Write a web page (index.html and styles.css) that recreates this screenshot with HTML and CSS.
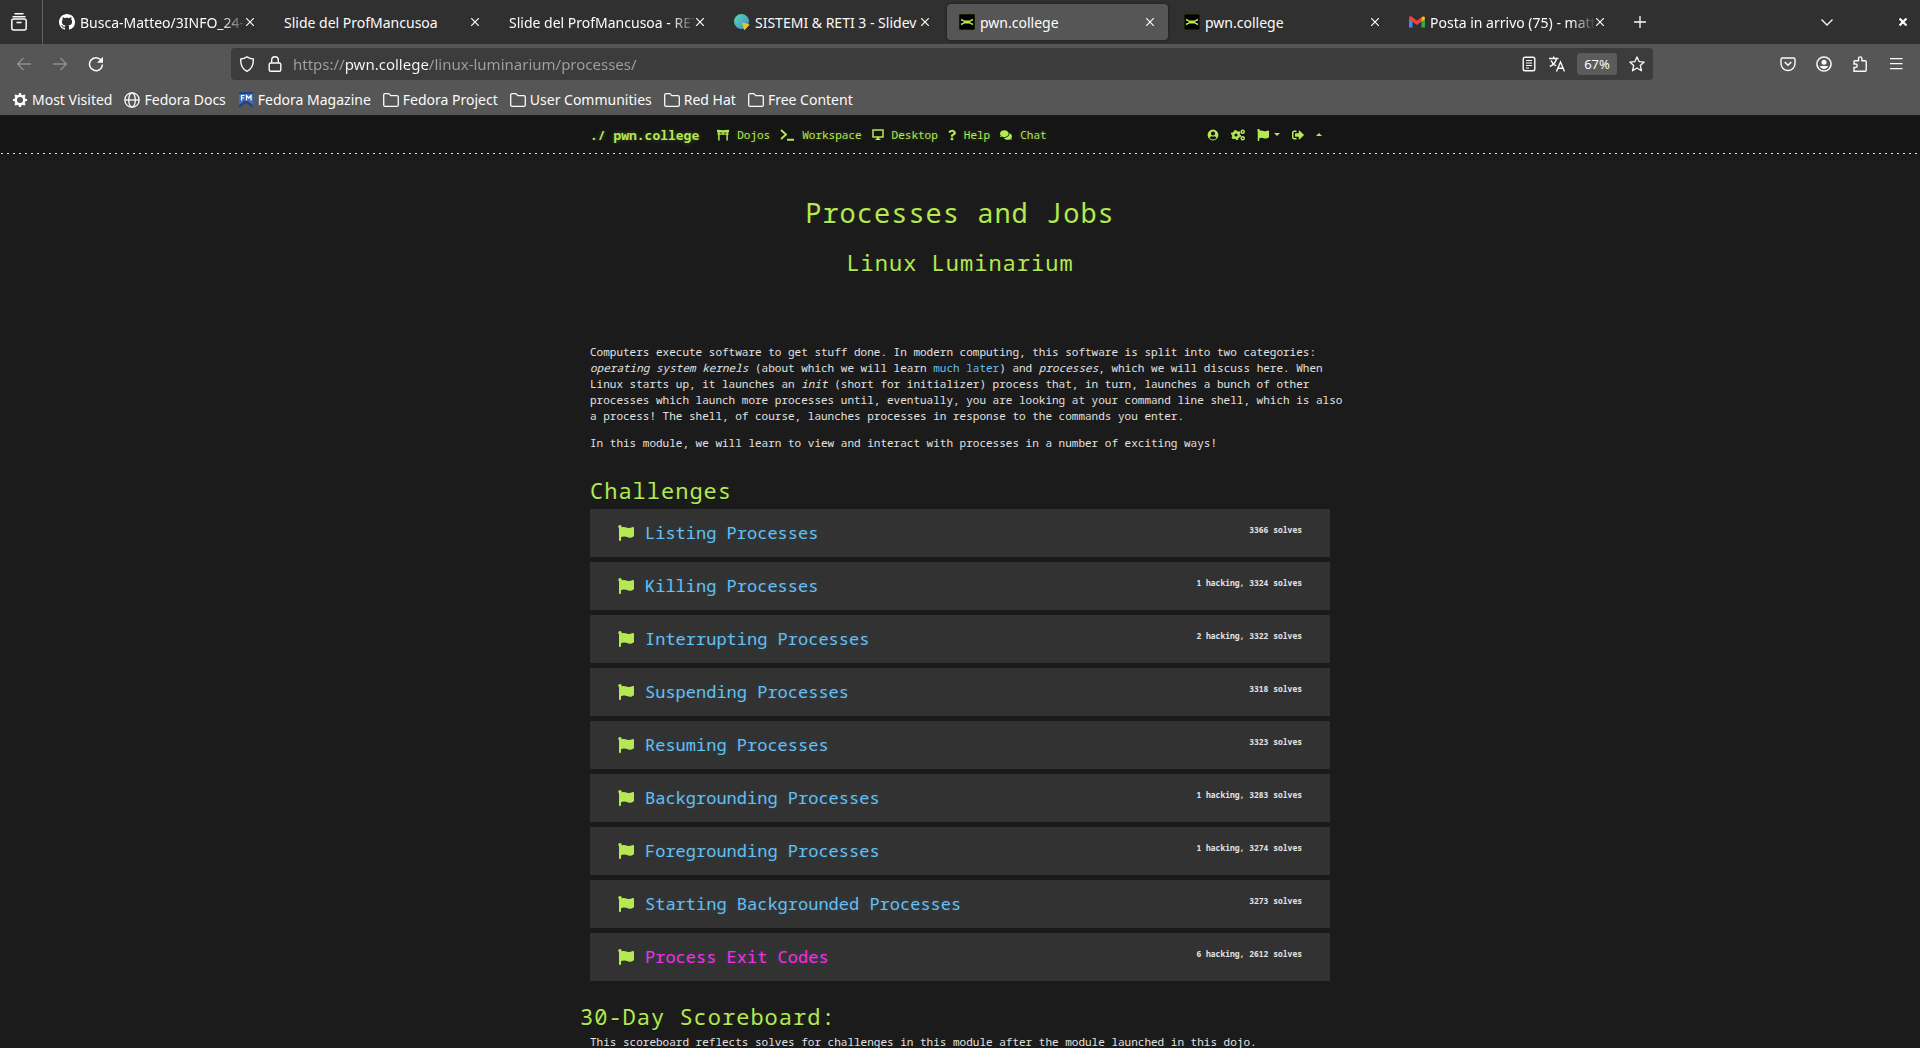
FILE: index.html
```html
<!DOCTYPE html>
<html lang="en">
<head>
<meta charset="utf-8">
<title>pwn.college</title>
<link rel="stylesheet" href="styles.css">
</head>
<body>
<svg class="defs" aria-hidden="true">
  <symbol id="flag" viewBox="0 0 512 512"><path d="M349.565 98.783C295.978 98.783 251.721 64 184.348 64c-24.955 0-47.309 4.384-68.045 12.013a55.947 55.947 0 0 0 3.586-23.562C118.117 24.015 94.806 1.206 66.338.048 34.345-1.254 8 24.296 8 56c0 19.026 9.497 35.825 24 45.945V488c0 13.255 10.745 24 24 24h16c13.255 0 24-10.745 24-24v-94.4c28.311-12.064 63.582-22.122 114.435-22.122 53.588 0 97.844 34.783 165.217 34.783 48.169 0 86.667-16.294 122.505-40.858C506.84 359.452 512 349.571 512 339.045v-243.1c0-23.393-24.269-38.87-45.485-29.016-34.338 15.948-76.454 31.854-116.95 31.854z"/></symbol>
  <symbol id="close" viewBox="0 0 8 8"><path d="M0 0l8 8M8 0L0 8" fill="none" stroke="currentColor" stroke-width="1.2"/></symbol>
  <symbol id="folder" viewBox="0 0 16 16"><path d="M.7 12.5v-9.500q0-1.400 1.400-1.400h3.700l2 2h6q1.500 0 1.500 1.500v7.900q0 1.400-1.500 1.400H2.100q-1.400 0-1.400-1.400z" fill="none" stroke="currentColor" stroke-width="1.300"/></symbol>
  <symbol id="pwn" viewBox="0 0 16 16"><rect width="16" height="16" rx="1" fill="#000" stroke="#2c3b12"/><path d="M2 5.500l3.500 1.800h5L14 5.500M2 10.500l3.500-1.800h5L14 10.500M5 8h6" fill="none" stroke="#b5e853" stroke-width="1.500"/></symbol>
</svg>

<header class="browser">
  <div class="tabstrip">
    <button class="recent" aria-label="Recent browsing"><svg width="16" height="18" viewBox="0 0 16 18"><path d="M3.500.8h9M1.500 3.800h13" stroke="currentColor" stroke-width="1.500" fill="none"/><rect x=".8" y="6" width="14.400" height="11" rx="2" fill="none" stroke="currentColor" stroke-width="1.500"/><path d="M5.500 9.500h5" stroke="currentColor" stroke-width="1.600"/></svg></button>
    <div class="tabs">
      <div class="tab"><svg class="i16" viewBox="0 0 16 16"><path fill="#fff" d="M8 0C3.580 0 0 3.580 0 8c0 3.540 2.290 6.530 5.470 7.590.4.070.55-.17.55-.38 0-.19-.01-.82-.01-1.490-2.010.37-2.530-.49-2.690-.94-.09-.23-.48-.94-.82-1.130-.28-.15-.68-.52-.01-.53.63-.01 1.080.58 1.230.82.72 1.210 1.870.87 2.330.66.07-.52.28-.87.51-1.070-1.780-.2-3.640-.89-3.640-3.950 0-.87.31-1.590.82-2.150-.08-.2-.36-1.020.08-2.120 0 0 .67-.21 2.200.82.64-.18 1.320-.27 2-.27s1.360.09 2 .27c1.530-1.040 2.200-.82 2.200-.82.44 1.100.16 1.920.08 2.120.51.56.82 1.270.82 2.150 0 3.070-1.870 3.750-3.650 3.950.29.25.54.73.54 1.480 0 1.070-.01 1.930-.01 2.200 0 .21.15.46.55.38A8.010 8.010 0 0 0 16 8c0-4.420-3.580-8-8-8z"/></svg><span class="label fade">Busca-Matteo/3INFO_24-25</span><button class="x" aria-label="Close tab"><svg><use href="#close"/></svg></button></div>
      <div class="tab"><span class="label">Slide del ProfMancusoa</span><button class="x" aria-label="Close tab"><svg><use href="#close"/></svg></button></div>
      <div class="tab"><span class="label fade">Slide del ProfMancusoa - RETI</span><button class="x" aria-label="Close tab"><svg><use href="#close"/></svg></button></div>
      <div class="tab"><svg class="i16" viewBox="0 0 16 16"><defs><linearGradient id="sl" x1="0" y1="0" x2="1" y2="1"><stop offset="0" stop-color="#5fd8b4"/><stop offset="1" stop-color="#3a8fc8"/></linearGradient></defs><circle cx="7.500" cy="7.500" r="7.500" fill="url(#sl)"/><path d="M8.500 9l6.500 1.800-4.500 5z" fill="#fcbc1a" stroke="#fcbc1a" stroke-linejoin="round"/></svg><span class="label">SISTEMI &amp; RETI 3 - Slidev</span><button class="x" aria-label="Close tab"><svg><use href="#close"/></svg></button></div>
      <div class="tab active"><svg class="i16"><use href="#pwn"/></svg><span class="label">pwn.college</span><button class="x" aria-label="Close tab"><svg><use href="#close"/></svg></button></div>
      <div class="tab"><svg class="i16"><use href="#pwn"/></svg><span class="label">pwn.college</span><button class="x" aria-label="Close tab"><svg><use href="#close"/></svg></button></div>
      <div class="tab"><svg class="i16" viewBox="0 0 16 16"><path d="M0 4v9.500h3.500V6z" fill="#4285f4"/><path d="M16 4v9.500h-3.500V6z" fill="#34a853"/><path d="M0 4q0-2 2-2l6 4.800V11L0 5.500z" fill="#ea4335"/><path d="M8 6.800L12.500 3v4.500L8 11z" fill="#ea4335"/><path d="M12.500 3.200Q14 2 15.200 2.600 16 3 16 5l-3.500 2.700z" fill="#fbbc04"/></svg><span class="label fade">Posta in arrivo (75) - matteo</span><button class="x" aria-label="Close tab"><svg><use href="#close"/></svg></button></div>
    </div>
    <button class="ib" aria-label="New tab"><svg class="i12" viewBox="0 0 12 12"><path d="M6 0v12M0 6h12" stroke="currentColor" stroke-width="1.300"/></svg></button>
    <div class="tabend">
      <button class="ib" aria-label="List all tabs"><svg class="i12" viewBox="0 0 12 12"><path d="M.5 3.500L6 9l5.500-5.500" fill="none" stroke="currentColor" stroke-width="1.300"/></svg></button>
      <button class="ib" aria-label="Close window"><svg width="8" height="8" viewBox="0 0 8 8"><path d="M.5.5l7 7M7.500.5l-7 7" stroke="#fff" stroke-width="2.200"/></svg></button>
    </div>
  </div>

  <div class="toolbar">
    <div class="navbuttons">
      <button class="ib dim" aria-label="Back"><svg class="i16" viewBox="0 0 16 16"><path d="M15 8H1.500M7.500 2L1.500 8l6 6" fill="none" stroke="currentColor" stroke-width="1.400"/></svg></button>
      <button class="ib dim" aria-label="Forward"><svg class="i16" viewBox="0 0 16 16"><path d="M1 8h13.500M8.500 2l6 6-6 6" fill="none" stroke="currentColor" stroke-width="1.400"/></svg></button>
      <button class="ib" aria-label="Reload"><svg class="i16" viewBox="0 0 16 16"><path d="M13 4a6.500 6.500 0 1 0 1.500 4.500" fill="none" stroke="currentColor" stroke-width="1.500"/><path d="M15 .8v6H9z" fill="currentColor"/></svg></button>
    </div>
    <div class="urlbar">
      <svg class="i16" viewBox="0 0 16 16"><path d="M8 .8c2 1.200 4 2 6.200 2.200C14.700 8.500 12.500 13 8 15.300 3.500 13 1.300 8.500 1.800 3 4 2.800 6 2 8 .8z" fill="none" stroke="currentColor" stroke-width="1.400"/></svg>
      <svg class="i16" viewBox="0 0 16 16"><rect x="2.200" y="7" width="11.600" height="8.200" rx="1.500" fill="none" stroke="currentColor" stroke-width="1.400"/><path d="M4.700 7V4a3.300 3.300 0 0 1 6.600 0v3" fill="none" stroke="currentColor" stroke-width="1.400"/></svg>
      <input class="url" type="text" aria-label="Address" value="https://pwn.college/linux-luminarium/processes/">
      <button class="ub" aria-label="Reader view"><svg class="i16" viewBox="0 0 16 16"><rect x="2.200" y="1.200" width="11.600" height="13.600" rx="1.800" fill="none" stroke="currentColor" stroke-width="1.400"/><path d="M5 4.500h6M5 7h6M5 9.500h6M5 12h3" stroke="currentColor" stroke-width="1.200"/></svg></button>
      <button class="ub" aria-label="Translate"><svg class="i16" viewBox="0 0 16 16"><path d="M0 2.500h9.500M4.700.5v2M7.500 2.500Q6.500 8 .8 10.500M2 4.500q1.500 3.500 5 5.300M7.500 15.500l4-9.500 4 9.500M9 12.300h5" fill="none" stroke="currentColor" stroke-width="1.400"/></svg></button>
      <button class="zoomlevel">67%</button>
      <button class="ub" aria-label="Bookmark this page"><svg class="i16" viewBox="0 0 16 16"><path d="M8 .9l2.100 4.700 5.100.5-3.900 3.400 1.200 5.300L8 12l-4.500 2.800 1.200-5.300L.8 6.100l5.100-.5z" fill="none" stroke="currentColor" stroke-width="1.300" stroke-linejoin="round"/></svg></button>
    </div>
    <div class="tools">
      <button class="ib" aria-label="Save to Pocket"><svg class="i16" viewBox="0 0 16 16"><path d="M2.500 2h11q1.500 0 1.500 1.500V7.500a7 7 0 0 1-14 0V3.500Q1 2 2.500 2z" fill="none" stroke="currentColor" stroke-width="1.400"/><path d="M4.700 6L8 9.200 11.300 6" fill="none" stroke="currentColor" stroke-width="1.500"/></svg></button>
      <button class="ib" aria-label="Account"><svg class="i16" viewBox="0 0 16 16"><circle cx="8" cy="8" r="7.100" fill="none" stroke="currentColor" stroke-width="1.500"/><circle cx="8" cy="6.200" r="2.500" fill="currentColor"/><path d="M3.800 10h8.400Q11 13 8 13t-4.200-3z" fill="currentColor"/></svg></button>
      <button class="ib" aria-label="Extensions"><svg class="i16" viewBox="0 0 16 16"><path d="M2 15.200V11.500h1.500a1.600 1.600 0 0 0 0-3.500H2V5.500q0-.8.8-.8H6.500V2.600a1.700 1.700 0 0 1 3.400 0v2.100h3.300q1 0 1 1v8.500q0 1-1 1z" fill="none" stroke="currentColor" stroke-width="1.400"/></svg></button>
      <button class="ib" aria-label="Menu"><svg class="i16" viewBox="0 0 16 16"><path d="M2 2.700h12.500M2 7.700h12.500M2 12.700h12.500" stroke="currentColor" stroke-width="1.300"/></svg></button>
    </div>
  </div>

  <nav class="bookmarks" aria-label="Bookmarks">
    <a href="#"><svg class="i16" viewBox="0 0 16 16"><circle cx="8" cy="8" r="4.300" fill="none" stroke="currentColor" stroke-width="2.600"/><path d="M8 1v2.500M8 12.500V15M1 8h2.500M12.500 8H15M3.100 3.100l1.700 1.700M11.200 11.200l1.700 1.700M3.100 12.900l1.700-1.700M11.200 4.800l1.700-1.700" stroke="currentColor" stroke-width="2.200"/></svg>Most Visited</a>
    <a href="#"><svg class="i16" viewBox="0 0 16 16"><g fill="none" stroke="currentColor" stroke-width="1.300"><circle cx="8" cy="8" r="7.200"/><ellipse cx="8" cy="8" rx="3.300" ry="7.200"/><path d="M1 8h14"/></g></svg>Fedora Docs</a>
    <a href="#"><svg class="i16" viewBox="0 0 16 16"><path d="M1 0h14v16l-7-5-7 5z" fill="#3c6eb4"/><path d="M1 0h14v2H1zM1 16v-3l7-5 7 5v3l-7-5z" fill="#294172"/><path d="M3.500 8.500V3.500h3M3.500 6h2.500M8.500 8.500v-5l2.200 2.500L13 3.500v5" fill="none" stroke="#fff" stroke-width="1.200"/></svg>Fedora Magazine</a>
    <a href="#"><svg class="i16"><use href="#folder"/></svg>Fedora Project</a>
    <a href="#"><svg class="i16"><use href="#folder"/></svg>User Communities</a>
    <a href="#"><svg class="i16"><use href="#folder"/></svg>Red Hat</a>
    <a href="#"><svg class="i16"><use href="#folder"/></svg>Free Content</a>
  </nav>
</header>

<div class="page">
  <nav class="sitenav" aria-label="Site">
    <div class="container navrow">
      <a class="brand" href="#">./ pwn.college</a>
      <a href="#"><svg class="i12" viewBox="0 0 512 512"><path d="M0 40q0-14 14-8 242 32 484 0 14-6 14 8v88q0 16-16 16h-32v48h32v56h-32v240h-64V248H112v240H48V248H16v-56h32v-48H16Q0 144 0 128zM112 144v48h112v-48zm176 0v48h112v-48z"/></svg>Dojos</a>
      <a href="#"><svg class="i14" viewBox="0 0 14 12"><path d="M1 1l5 4.500L1 10M7 10.700h7" fill="none" stroke="currentColor" stroke-width="1.900"/></svg>Workspace</a>
      <a href="#"><svg class="i12" viewBox="0 0 12 12"><path d="M1 1h10v7H1z" fill="none" stroke="currentColor" stroke-width="1.500"/><path d="M5 8h2l.5 2h1v1h-5v-1h1z"/></svg>Desktop</a>
      <a href="#"><svg class="i8" viewBox="0 0 384 512"><path d="M202.021 0C122.202 0 70.503 32.703 29.914 91.026c-7.363 10.580-5.093 25.086 5.178 32.874l43.138 32.709c10.373 7.865 25.132 6.026 33.253-4.148 25.049-31.381 43.630-49.449 82.757-49.449 30.764 0 68.816 19.799 68.816 49.631 0 22.552-18.617 34.134-48.993 51.164-35.423 19.860-82.299 44.576-82.299 106.405V320c0 13.255 10.745 24 24 24h72.471c13.255 0 24-10.745 24-24v-5.773c0-42.860 125.268-44.645 125.268-160.627C377.504 66.256 286.902 0 202.021 0zM192 373.459c-38.196 0-69.271 31.075-69.271 69.271 0 38.195 31.075 69.270 69.271 69.270s69.271-31.075 69.271-69.271-31.075-69.270-69.271-69.270z"/></svg>Help</a>
      <a href="#"><svg class="i12" viewBox="0 0 576 512"><path d="M416 192c0-88.400-93.100-160-208-160S0 103.600 0 192c0 34.300 14.100 65.900 38 92-13.400 30.200-35.500 54.200-35.800 54.500-2.200 2.300-2.800 5.700-1.500 8.700S4.800 352 8 352c36.600 0 66.900-12.300 88.700-25 32.200 15.700 70.300 25 111.300 25 114.900 0 208-71.600 208-160zm122 220c23.900-26 38-57.700 38-92 0-66.900-53.500-124.200-129.300-148.100.9 6.600 1.300 13.300 1.300 20.100 0 105.900-107.700 192-240 192-10.800 0-21.300-.8-31.700-1.900C207.800 439.600 281.800 480 368 480c41 0 79.100-9.200 111.300-25 21.800 12.700 52.100 25 88.700 25 3.200 0 6.100-1.900 7.300-4.800 1.300-2.900.7-6.300-1.500-8.700-.3-.3-22.400-24.200-35.800-54.500z"/></svg>Chat</a>
      <div class="usertools">
        <a href="#" aria-label="Profile"><svg class="i12" viewBox="0 0 12 12"><path fill-rule="evenodd" d="M6 .6a5.400 5.400 0 1 0 0 10.800A5.400 5.400 0 1 0 6 .6zM6 2.400a2 2 0 1 1 0 4.200 2 2 0 1 1 0-4.200zM2.500 9Q3.200 7.300 4.800 7.300q1.200.5 2.400 0Q8.800 7.300 9.500 9 8 10.500 6 10.500T2.500 9z"/></svg></a>
        <a href="#" aria-label="Settings"><svg class="i14" viewBox="0 0 14 12"><g fill="none" stroke="currentColor"><circle cx="5" cy="6" r="2.800" stroke-width="2.400"/><circle cx="5" cy="6" r="4.400" stroke-width="1.400" stroke-dasharray="2.300 2.300"/><circle cx="11.700" cy="2.700" r="1.500" stroke-width="1.500"/><circle cx="11.700" cy="9.300" r="1.500" stroke-width="1.500"/></g></svg></a>
        <a href="#" class="drop" aria-label="Flag"><svg class="i12"><use href="#flag"/></svg><svg class="caret" viewBox="0 0 6 3"><path d="M0 0h6L3 3z"/></svg></a>
        <a href="#" aria-label="Log out"><svg class="i12" viewBox="0 0 512 512"><path d="M497 273L329 441c-15 15-41 4.500-41-17v-96H152c-13.300 0-24-10.700-24-24v-96c0-13.300 10.700-24 24-24h136V88c0-21.400 25.900-32 41-17l168 168c9.300 9.400 9.300 24.600 0 34zM192 436v-40c0-6.600-5.400-12-12-12H96c-17.700 0-32-14.300-32-32V160c0-17.700 14.300-32 32-32h84c6.600 0 12-5.400 12-12V76c0-6.600-5.400-12-12-12H96c-53 0-96 43-96 96v192c0 53 43 96 96 96h84c6.600 0 12-5.400 12-12z"/></svg></a>
        <a href="#" aria-label="Collapse"><svg class="caret" viewBox="0 0 6 3"><path d="M0 3h6L3 0z"/></svg></a>
      </div>
    </div>
  </nav>

  <main class="container">
    <div class="hero">
      <h1>Processes and Jobs</h1>
      <h2>Linux Luminarium</h2>
    </div>
    <div class="intro">
      <p>Computers execute software to get stuff done. In modern computing, this software is split into two categories: <em>operating system kernels</em> (about which we will learn <a href="#">much later</a>) and <em>processes</em>, which we will discuss here. When Linux starts up, it launches an <em>init</em> (short for initializer) process that, in turn, launches a bunch of other processes which launch more processes until, eventually, you are looking at your command line shell, which is also a process! The shell, of course, launches processes in response to the commands you enter.</p>
      <p>In this module, we will learn to view and interact with processes in a number of exciting ways!</p>
    </div>
    <h2>Challenges</h2>
    <div class="cards">
      <a class="card" href="#"><svg><use href="#flag"/></svg><h4>Listing Processes</h4><span>3366 solves</span></a>
      <a class="card" href="#"><svg><use href="#flag"/></svg><h4>Killing Processes</h4><span>1 hacking, 3324 solves</span></a>
      <a class="card" href="#"><svg><use href="#flag"/></svg><h4>Interrupting Processes</h4><span>2 hacking, 3322 solves</span></a>
      <a class="card" href="#"><svg><use href="#flag"/></svg><h4>Suspending Processes</h4><span>3318 solves</span></a>
      <a class="card" href="#"><svg><use href="#flag"/></svg><h4>Resuming Processes</h4><span>3323 solves</span></a>
      <a class="card" href="#"><svg><use href="#flag"/></svg><h4>Backgrounding Processes</h4><span>1 hacking, 3283 solves</span></a>
      <a class="card" href="#"><svg><use href="#flag"/></svg><h4>Foregrounding Processes</h4><span>1 hacking, 3274 solves</span></a>
      <a class="card" href="#"><svg><use href="#flag"/></svg><h4>Starting Backgrounded Processes</h4><span>3273 solves</span></a>
      <a class="card current" href="#"><svg><use href="#flag"/></svg><h4>Process Exit Codes</h4><span>6 hacking, 2612 solves</span></a>
    </div>
    <h2 class="score">30-Day Scoreboard:</h2>
    <p class="scorenote">This scoreboard reflects solves for challenges in this module after the module launched in this dojo.</p>
  </main>
</div>
</body>
</html>
```
FILE: styles.css
```css
* { box-sizing: border-box; }
html, body { height: 100%; }
body {
  margin: 0;
  display: flex;
  flex-direction: column;
  overflow: hidden;
  background: #1b1b1b;
  font-family: "Noto Sans", sans-serif;
}
button, input { font: inherit; color: inherit; background: none; border: 0; padding: 0; margin: 0; }
button { display: flex; align-items: center; justify-content: center; flex: none; }
a { color: inherit; text-decoration: none; }
svg { display: block; flex: none; }
.defs { position: absolute; width: 0; height: 0; }
.i16 { width: 16px; height: 16px; }
.i14 { width: 14px; height: 12px; }
.i12 { width: 12px; height: 12px; }
.i8 { width: 8px; height: 12px; }

/* browser frame */
.browser { flex: none; background: #565656; color: #fbfbfb; font-size: 14px; border-bottom: 1px solid #1a1a1e; }
.tabstrip { display: flex; align-items: center; height: 44px; background: #303030; }
.recent { width: 43px; height: 44px; padding-right: 4px; border-right: 1px solid #606060; }
.tabs { display: flex; gap: 4px; margin-left: 4px; }
.tab { display: flex; align-items: center; width: 221px; height: 36px; padding: 0 14px 0 12px; border-radius: 4px; }
.tab.active { background: #565656; box-shadow: 0 0 3px #181818; }
.tab .i16 { margin-right: 5px; }
.label { flex: 1; min-width: 0; overflow: hidden; white-space: nowrap; }
.fade { mask-image: linear-gradient(to left, transparent, #000 24px); }
.x, .x svg { width: 8px; height: 8px; }
.ib { width: 36px; height: 32px; }
.tabs + .ib { margin-left: 4px; }
.tabend { display: flex; gap: 41px; margin-left: auto; }
.tabend .ib:last-child { width: 34px; }

.toolbar { display: flex; align-items: center; height: 40px; padding: 0 6px; }
.navbuttons { display: flex; width: 225px; }
.dim { color: #8f8f8f; }
.urlbar { display: flex; align-items: center; flex: 1; height: 32px; padding: 0 8px; background: #3c3c3c; border-radius: 4px; }
.urlbar > svg { margin-right: 12px; }
.url {
  flex: 1; min-width: 0; height: 32px; outline: 0; margin-left: -2px;
  font-size: 15px;
  color: transparent;
  background: linear-gradient(90deg, #a0a0a0 51px, #fbfbfb 51px, #fbfbfb 135px, #a0a0a0 135px);
  background-clip: text; -webkit-background-clip: text;
}
.ub { width: 28px; height: 28px; }
.zoomlevel { width: 40px; height: 22px; margin: 0 6px; border-radius: 3px; background: #5b5b5b; font-size: 13px; }
.ub:last-child { width: 16px; margin-left: 6px; }
.tools { display: flex; padding-left: 117px; }

.bookmarks { display: flex; align-items: center; gap: 12px; height: 31px; padding: 0 12px; }
.bookmarks a { display: flex; align-items: center; gap: 4px; white-space: nowrap; }

/* site */
.page { flex: 1; min-height: 0; overflow: hidden; color: #e2e2e2; font: 11px/16px "Noto Sans Mono", "DejaVu Sans Mono", monospace; }
.container { width: 100%; max-width: 740px; margin: 0 auto; }
.sitenav {
  padding-bottom: 1px;
  background: repeating-linear-gradient(90deg, transparent 0 1px, #e4f5c0 1px 3px, transparent 3px 6px) bottom / 100% 1px no-repeat #151515;
  color: #b5e853;
  fill: currentColor;
  text-shadow: 0 0 5px rgba(181, 232, 83, .3);
}
.navrow { display: flex; align-items: center; gap: 10px; height: 37px; }
.navrow a { display: flex; align-items: center; gap: 8px; }
.navrow .brand { font-size: 13px; font-weight: 700; margin-right: 8px; }
.usertools { display: flex; align-items: center; gap: 12px; margin: 0 8px 0 auto; }
.navrow .drop { gap: 5px; }
.caret { width: 6px; height: 3px; }

h1, h2, h4 { margin: 0; font-weight: 400; color: #b5e853; }
h1, h2 { letter-spacing: 1px; text-shadow: 0 1px 1px rgba(0, 0, 0, .4), 0 0 5px rgba(181, 232, 83, .1); }
h1 { font-size: 27px; line-height: 32px; }
h2 { font-size: 22px; line-height: 26px; }
.hero { display: flex; flex-direction: column; align-items: center; gap: 20px; padding: 43px 0 69px; }
/* long lines of the intro may run a little past the column */
.intro { display: grid; gap: 11px; margin-right: -14px; padding-bottom: 26px; }
p { margin: 0; }
.intro a { color: #63c0f5; }
.cards { display: grid; gap: 5px; padding-top: 6px; }
.card { display: flex; align-items: center; gap: 11px; height: 48px; padding: 0 28px; background: #323232; color: #63c0f5; }
.card svg { width: 16px; height: 16px; fill: #b5e853; }
.card h4 { flex: 1; color: inherit; font-size: 17px; line-height: 20px; text-shadow: 0 0 5px rgba(99, 192, 245, .15); }
.card.current { color: #f92bec; }
.card span { padding-bottom: 6px; color: #e2e2e2; font-size: 8px; font-weight: 700; }
.score { margin: 22px -10px 0; }
.scorenote { margin-top: 5px; }
```
